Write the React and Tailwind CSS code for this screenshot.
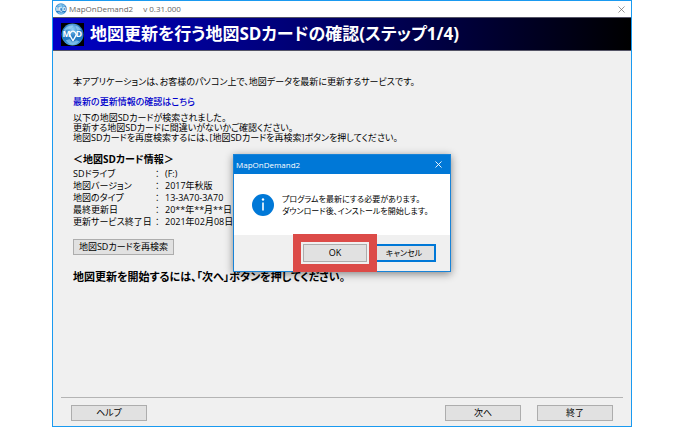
import { useState } from 'react';
import { X } from 'lucide-react';

const cardInfo = [
  { label: 'SDドライブ', value: '(F:)' },
  { label: '地図バージョン', value: '2017年秋版' },
  { label: '地図のタイプ', value: '13-3A70-3A70' },
  { label: '最終更新日', value: '20**年**月**日' },
  { label: '更新サービス終了日', value: '2021年02月08日' },
];

function Logo({ className }) {
  return (
    <svg viewBox="0 0 24 24" className={className} aria-hidden="true">
      <defs>
        <radialGradient id="globe" cx="0.5" cy="0.25" r="0.75">
          <stop offset="0" stopColor="#8fd0f5" />
          <stop offset="0.45" stopColor="#2a7fc6" />
          <stop offset="0.8" stopColor="#1f78c4" />
          <stop offset="1" stopColor="#5cb4ea" />
        </radialGradient>
      </defs>
      <circle cx="12" cy="12" r="11.5" fill="url(#globe)" />
      <path d="M3 7c3-4 8-5 10-4l-3 3-4 1-2 2zM15 3c3 0 5 2 6 4l-4 1zM5 18l4-1 3 3 4-2 3 1c-4 5-10 5-14-1z" fill="#a9dcf8" opacity="0.6" />
      <text x="1.500" y="15" fontSize="9" fontWeight="700" fill="#fff">M</text>
      <text x="15.500" y="15" fontSize="9" fontWeight="700" fill="#fff">D</text>
      <path d="M12.500 18.500l-2.600-4.500a3.300 3.300 0 1 1 5.200 0z" fill="none" stroke="#fff" strokeWidth="1.400" />
    </svg>
  );
}

function PushButton({ className, children, ...props }) {
  return (
    <button
      type="button"
      className={`border border-[#adadad] bg-[#e1e1e1] text-center hover:border-[#0078d7] hover:bg-[#e5f1fb] ${className}`}
      {...props}
    >
      {children}
    </button>
  );
}

function UpdateDialog({ onClose }) {
  return (
    <div
      role="dialog"
      aria-labelledby="dialog-title"
      className="absolute top-[153px] left-[180px] w-[218px] border border-[#1883d7] bg-white shadow-[0_2px_8px_rgba(0,0,0,0.45)]"
    >
      <div className="flex h-[19px] items-center justify-between bg-[#0078d7] pr-1.5 pl-0.5 text-white">
        <h2 id="dialog-title" className="text-[8px]">MapOnDemand2</h2>
        <button type="button" aria-label="閉じる" onClick={onClose}>
          <X size={11} strokeWidth={2} />
        </button>
      </div>

      <div className="flex h-[61px] items-center gap-2 pl-[18px]">
        <svg viewBox="0 0 22 22" className="size-[22px]" aria-hidden="true">
          <circle cx="11" cy="11" r="11" fill="#0078d7" />
          <circle cx="11" cy="5.500" r="1.200" fill="#fff" />
          <path d="M11 8.500v8" stroke="#fff" strokeWidth="1.600" />
        </svg>
        <p className="text-[8px] leading-[12px] whitespace-nowrap">
          プログラムを最新にする必要があります。<br />
          ダウンロード後、インストールを開始します。
        </p>
      </div>

      <div className="flex h-[36px] items-center justify-end gap-[5px] bg-[#f0f0f0] pr-3.5">
        <div className="relative">
          <PushButton className="block h-[18px] w-[64px] text-[9px]" onClick={onClose}>OK</PushButton>
          <div className="pointer-events-none absolute -inset-[10px] z-10 border-8 border-[#dc4b48]" />
        </div>
        <button
          type="button"
          onClick={onClose}
          className="h-[18px] w-[64px] border-2 border-[#0078d7] bg-[#e1e1e1] text-[8px] leading-[12px]"
        >
          キャンセル
        </button>
      </div>
    </div>
  );
}

export default function App() {
  const [dialogOpen, setDialogOpen] = useState(true);

  return (
    <div className="min-h-screen bg-white pr-[52px] pl-[52px] font-['Open_Sans','Noto_Sans_CJK_JP',sans-serif] text-black [font-feature-settings:'palt']">
      <div className="relative flex min-h-screen flex-col border border-[#1a9af0] bg-[#f0f0f0]">
        {/* タイトルバー */}
        <div className="flex h-4 items-center bg-white pr-1 pl-0.5 text-[8px] text-[#666]">
          <Logo className="mr-0.5 size-3" />
          <span>MapOnDemand2</span>
          <span className="ml-2.5">v 0.31.000</span>
          <button type="button" aria-label="閉じる" className="ml-auto">
            <X size={11} strokeWidth={1.5} />
          </button>
        </div>

        {/* ヘッダー */}
        <header className="flex h-[34px] items-center gap-1.5 border-y border-[#555566] bg-linear-to-r/srgb from-[#0000c8] to-black pl-2 text-white">
          <div className="bg-black">
            <Logo className="size-[23px]" />
          </div>
          <h1 className="text-[17px] font-bold whitespace-nowrap">地図更新を行う地図SDカードの確認(ステップ1/4)</h1>
        </header>

        <main className="flex-1 px-5 pt-[25px] text-[9px] leading-[12px]">
          <p>本アプリケーションは、お客様のパソコン上で、地図データを最新に更新するサービスです。</p>
          <a href="#update" className="mt-2 block w-fit font-medium text-[#0000cc]">最新の更新情報の確認はこちら</a>
          <p className="mt-[5px] leading-[10px]">
            以下の地図SDカードが検索されました。<br />
            更新する地図SDカードに間違いがないかご確認ください。<br />
            地図SDカードを再度検索するには、[地図SDカードを再検索]ボタンを押してください。
          </p>

          <h2 className="mt-2.5 text-[10px] font-bold">＜地図SDカード情報＞</h2>
          <dl className="mt-[3px]">
            {cardInfo.map((row) => (
              <div key={row.label} className="flex whitespace-nowrap">
                <dt className="w-[82px]">{row.label}</dt>
                <dd className="flex"><span className="w-2.5">：</span>{row.value}</dd>
              </div>
            ))}
          </dl>

          <PushButton className="mt-[11px] block h-4 w-[101px] leading-[12px] whitespace-nowrap">地図SDカードを再検索</PushButton>
          <p className="mt-3.5 text-[11px] leading-[16px] font-bold">地図更新を開始するには、「次へ」ボタンを押してください。</p>
        </main>

        {/* 下部ボタン */}
        <footer className="mx-2 flex border-t border-[#b4b4b4] px-2.5 pt-[7px] pb-[5px] text-[9px] leading-[12px]">
          <PushButton className="h-4 w-[76px]">ヘルプ</PushButton>
          <PushButton className="ml-auto h-4 w-[76px]">次へ</PushButton>
          <PushButton className="ml-4 h-4 w-[76px]">終了</PushButton>
        </footer>

        {dialogOpen && <UpdateDialog onClose={() => setDialogOpen(false)} />}
      </div>
    </div>
  );
}
